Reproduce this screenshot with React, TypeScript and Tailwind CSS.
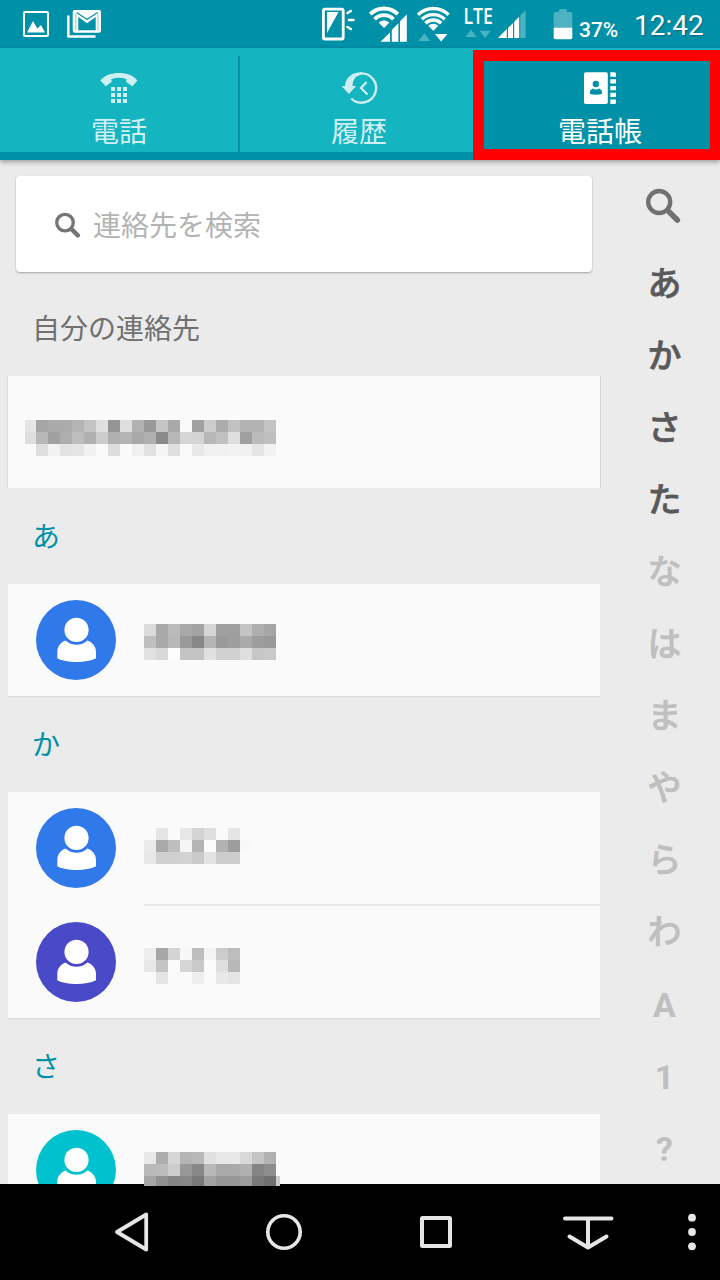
import type { ReactNode } from "react";

const FONT = "font-['Roboto','Noto_Sans_CJK_JP',sans-serif]";

// One hex pair per grey tile, rows separated by "/"
const MASKS = {
  own: "e5 a5 aa ab b4 c3 df 95 df b1 98 c5 a9 fa a1 cc ab c2 b3 b3 c3/de b8 a0 ae bd b0 cc b0 b4 a8 b0 8a b7 d5 d4 b7 c0 de 9f bb bf/fa de f2 e3 e5 f1 fa dd fa f0 e1 f5 df fa e8 f0 f0 f2 f1 e5 f2",
  a1: "db a9 ba a8 a3 d5 9f 9f c4 ae a5/bf a9 b8 99 88 b5 9a 9e aa 9d 99/e1 d9 fd c4 c3 e0 d1 d1 df c6 ca",
  ka1: "fa e4 fa e7 d4 de fa e4 fa/ea aa be f5 b4 fb b2 9d f8/e8 cf d0 d3 ca e3 cc cd fa",
  ka2: "ee a7 d4 f7 bd f3 cc bd/e7 c3 fb d6 c9 fb de b8/fa e4 fa fa ee fa e8 e4",
  sa1: "e8 ad d6 b4 b8 e0 e7 e8 d8 c5 b2/b9 bc cc 98 87 b8 aa aa b0 84 8e/a5 90 85 87 78 a3 97 97 9c 79 70 cc",
};

const KANA = ["あ", "か", "さ", "た", "な", "は", "ま", "や", "ら", "わ"];
const LATIN = ["A", "1", "?"];

function Mosaic({ tiles, className = "" }: { tiles: string; className?: string }) {
  return (
    <div className={`flex flex-col ${className}`}>
      {tiles.split("/").map((row, y) => (
        <div key={y} className="flex h-3 last:h-[var(--last-row,12px)]">
          {row.split(" ").map((c, x) => (
            <div
              key={x}
              className="w-3 shrink-0 nth-[12]:last:w-1"
              style={{ backgroundColor: `#${c}${c}${c}` }}
            />
          ))}
        </div>
      ))}
    </div>
  );
}

function Avatar({ className }: { className: string }) {
  return (
    <svg viewBox="0 0 80 80" className={`size-20 shrink-0 rounded-full ${className}`}>
      <circle cx="40.5" cy="29.9" r="12.1" fill="#fff" />
      <path
        d="M29.6 40.6C35 46.2 46 46.2 51.4 40.6C56.5 42.6 60 46.5 60 52V58.2C55 60.8 48 62 40.6 62S26 60.8 21.3 58.2V52C21.3 46.5 24.5 42.6 29.6 40.6Z"
        fill="#fff"
      />
    </svg>
  );
}

function StatusBar() {
  return (
    <header className="flex h-12 shrink-0 bg-[#0091a8] text-white">
      <svg viewBox="16 0 40 48" className="ml-4 h-12 w-10" fill="none">
        <rect x="24" y="12" width="24" height="24" rx="1" stroke="#fff" strokeWidth="2" />
        <path d="M27 32.5L33 21L37.3 28.5L41 25L45 32.5Z" fill="#fff" />
      </svg>
      <svg viewBox="56 0 56 48" className="h-12 w-14" fill="none">
        <path d="M68.3 15.5V36.5H95.5" stroke="#fff" strokeWidth="2.6" strokeLinejoin="round" />
        <rect x="72.7" y="10" width="28.3" height="22.7" rx="2" fill="#fff" />
        <path d="M75.8 13.5V30.5M98 13.5V30.5" stroke="#5bb8c6" strokeWidth="0.7" />
        <path d="M78.3 17V30.3H95.7V17L87 23.2Z" fill="#0091a8" />
        <path d="M76.6 12.6L87 19.6L97.5 12.6" stroke="#0091a8" strokeWidth="1.2" />
      </svg>

      <svg viewBox="316 0 46 48" className="ml-[204px] h-12 w-[46px]" fill="none" stroke="#fff">
        <rect x="323.4" y="9.2" width="19.8" height="29.8" rx="1.5" strokeWidth="2.8" />
        <path d="M327 12H338.5L327 33Z" fill="#fff" stroke="none" />
        <path d="M347.5 13L350.8 11M349 20H353.5M347.5 27L350.8 29" strokeWidth="2.6" strokeLinecap="round" />
      </svg>
      <svg viewBox="362 0 50 48" className="h-12 w-[50px]" fill="none">
        <path d="M370.2 14.2A19.5 19.5 0 0 1 397.8 14.2M374.6 19.2A13 13 0 0 1 393.4 19.2" stroke="#fff" strokeWidth="3.8" />
        <path d="M378.6 22.6A8 8 0 0 1 389.4 22.6L384 28Z" fill="#fff" />
        <path d="M380.5 41.8L390 32.5V41.8ZM391.8 41.8V30L398.4 23.2V41.8ZM400 41.8V21.2L406.8 14.6V41.8Z" fill="#fff" />
      </svg>
      <svg viewBox="412 0 48 48" className="h-12 w-12" fill="none">
        <path
          d="M418 14.7A22 22 0 0 1 448.6 14.7M421.8 19.2A16.5 16.5 0 0 1 444.8 19.2M425.4 23.2A11.3 11.3 0 0 1 441.2 23.2"
          stroke="#fff"
          strokeWidth="3.3"
        />
        <path d="M428.2 25.8A7.3 7.3 0 0 1 438.4 25.8L433.3 30.8Z" fill="#fff" />
        <path d="M418.3 41L424.3 33.3L430.3 41Z" fill="#4db3c3" />
        <path d="M435 34H447.5L441.2 41.6Z" fill="#fff" />
      </svg>
      <svg viewBox="460 0 72 48" className="h-12 w-[72px]">
        <text x="463.5" y="24.4" textLength="29.5" lengthAdjust="spacingAndGlyphs" fill="#fff" className="font-['Open_Sans',sans-serif] text-[21px] font-semibold">
          LTE
        </text>
        <path d="M465.5 37L471 29.8L476.7 37ZM479.6 30.8H490.6L485 38Z" fill="#4db3c3" />
        <path d="M498 38L506.8 29V38ZM508 38V28L513 23V38ZM514.2 38V21.8L519.2 16.8V38Z" fill="#fff" />
        <path d="M520.3 38V15.6L525.6 10V38Z" fill="#4db3c3" />
      </svg>
      <svg viewBox="532 0 44 48" className="h-12 w-11">
        <path d="M559 12V10.5Q559 9 560.5 9H565.5Q567 9 567 10.5V12H570.5Q572.3 12 572.3 13.8V28H553.7V13.8Q553.7 12 555.5 12Z" fill="#4db3c3" />
        <path d="M553.7 27.8H572.3V37.5Q572.3 39.3 570.5 39.3H555.5Q553.7 39.3 553.7 37.5Z" fill="#fff" />
      </svg>
      <span className="ml-[3px] w-[55px] pt-[18px] text-[21px] leading-6 font-medium">37%</span>
      <span className="pt-2.5 text-[28px] leading-8 [text-shadow:1px_1px_2px_rgba(0,0,0,0.3)]">12:42</span>
    </header>
  );
}

function Tab({ label, className, children }: { label: string; className: string; children: ReactNode }) {
  return (
    <div className={`flex flex-col items-center text-[28px] leading-[34px] ${className}`}>
      {children}
      <span>{label}</span>
    </div>
  );
}

function Tabs() {
  return (
    <nav className="relative z-10 flex h-28 shrink-0 bg-[#14b5c0] text-[#cfeff2] shadow-[0_2px_5px_rgba(0,0,0,0.35)]">
      <Tab label="電話" className="w-[238px] border-b-8 border-[#0091a8] pt-5">
        <svg viewBox="99 68 40 48" className="h-12 w-10" fill="currentColor">
          <path d="M100.4 80.4C108 70.6 130 70.6 137.4 80.4L132.4 86.3L126 81.8L126.6 79.2C121.6 77.3 116.4 77.3 111.2 79.2L111.8 81.8L105.8 86.3Z" />
          <path d="M111 87h4v4h-4zM117 87h4v4h-4zM123 87h4v4h-4zM111 93h4v4h-4zM117 93h4v4h-4zM123 93h4v4h-4zM111 99h4v4h-4zM117 99h4v4h-4zM123 99h4v4h-4z" />
        </svg>
      </Tab>
      <div className="mt-2 w-0.5 bg-[#0091a8]" />
      <Tab label="履歴" className="w-[233px] border-b-8 border-[#0091a8] pt-5 pl-[5px]">
        <svg viewBox="339 68 40 48" className="h-12 w-10" fill="none" stroke="currentColor">
          <path d="M360 73.5A14.6 14.6 0 1 1 351.3 98.5" strokeWidth="2.4" />
          <path d="M361.5 72.3C352 72.3 345.5 77.5 345 86H341.5L348.9 94L356 86H352.5C352.5 80 355.5 75.5 361.5 74.8Z" fill="currentColor" stroke="none" />
          <path d="M366.5 82L361 88L367.5 94.5" strokeWidth="2.2" />
        </svg>
      </Tab>
      <Tab
        label="電話帳"
        className="mt-0.5 w-[247px] border-[11px] border-r-10 border-[#ff0000] bg-[#0091a8] pt-[7px] pl-1.5 text-white"
      >
        <svg viewBox="580 68 40 48" className="h-12 w-10 shrink-0" fill="currentColor">
          <rect x="584" y="72.2" width="23.8" height="31.8" rx="1.8" />
          <path d="M610.3 72.2H614.5Q616 72.2 616 73.7V76.8H610.3ZM610.3 79.2H616V83.4H610.3ZM610.3 86H616V90.2H610.3ZM610.3 92.8H616V97H610.3ZM610.3 99.5H616V102.5Q616 104 614.5 104H610.3Z" />
          <circle cx="595.9" cy="84" r="3.2" fill="#0091a8" />
          <path d="M592.6 88.4Q595.9 90.4 599.2 88.4Q602 89.6 602 92V94Q595.9 95.6 589.9 94V92Q589.9 89.6 592.6 88.4Z" fill="#0091a8" />
        </svg>
      </Tab>
    </nav>
  );
}

function SectionTitle({ children, className }: { children: ReactNode; className: string }) {
  return <h2 className={`flex items-center pt-1 pl-6 text-[28px] leading-8 ${className}`}>{children}</h2>;
}

function Contact({ color, tiles, className = "" }: { color: string; tiles: string; className?: string }) {
  return (
    <li className="flex h-28 items-start pt-4 pl-7">
      <Avatar className={color} />
      <Mosaic tiles={tiles} className={`ml-7 ${className}`} />
    </li>
  );
}

function ContactList() {
  return (
    <section className="w-[592px]">
      <label className="mt-4 ml-2 flex h-24 w-[576px] items-center rounded bg-white text-[28px] text-[#b3b3b3] shadow-[0_1px_2px_rgba(0,0,0,0.3)]">
        <svg viewBox="54 210 28 28" className="ml-[38px] size-7" fill="none" stroke="#757575" strokeLinecap="round">
          <circle cx="65" cy="222.6" r="8.3" strokeWidth="3.3" />
          <path d="M72 229.6L77.8 235.4" strokeWidth="4.4" />
        </svg>
        <span className="ml-[11px] pt-1.5">連絡先を検索</span>
      </label>
      <SectionTitle className="mt-2 h-24 text-[#707070]">自分の連絡先</SectionTitle>
      <div className="h-28 bg-[#fafafa] pt-11 pl-4 shadow-[1px_0_#d6d6d6,-1px_0_#dcdcdc]">
        <Mosaic tiles={MASKS.own} className="ml-px [&>div>div:first-child]:w-[11px]" />
      </div>

      <SectionTitle className="h-24 text-[#0091a8]">あ</SectionTitle>
      <ul className="bg-[#fafafa] shadow-[0_1px_#dbdbdb,0_2px_#e6e6e6]">
        <Contact color="bg-[#3079ea]" tiles={MASKS.a1} className="mt-6" />
      </ul>

      <SectionTitle className="h-24 text-[#0091a8]">か</SectionTitle>
      <ul className="bg-[#fafafa] shadow-[0_1px_#dbdbdb,0_2px_#e6e6e6]">
        <Contact color="bg-[#3079ea]" tiles={MASKS.ka1} className="mt-5" />
        <li className="ml-[136px] h-0.5 bg-[#e8e8e8]" />
        <Contact color="bg-[#4a49c7]" tiles={MASKS.ka2} className="mt-[26px]" />
      </ul>

      <SectionTitle className="h-24 text-[#0091a8]">さ</SectionTitle>
      <ul className="bg-[#fafafa]">
        <Contact color="bg-[#00c2cf]" tiles={MASKS.sa1} className="relative z-20 mt-[22px] [--last-row:10px]" />
      </ul>
    </section>
  );
}

function IndexBar() {
  return (
    <aside className="flex w-28 flex-col items-center pl-px text-[34px]">
      <svg viewBox="644 186 38 38" className="mt-[26px] mr-[3px] mb-6 size-[38px] shrink-0" fill="none" stroke="#707070" strokeLinecap="round">
        <circle cx="659.2" cy="202" r="11" strokeWidth="4.4" />
        <path d="M668.5 211.3L677.3 220" strokeWidth="5.6" />
      </svg>
      {KANA.map((ch, i) => (
        <span
          key={ch}
          className={`flex h-[72px] shrink-0 items-center font-medium [-webkit-text-stroke:0.6px_currentColor] ${i < 4 ? "text-[#595959]" : "text-[#bfbfbf]"}`}
        >
          {ch}
        </span>
      ))}
      {LATIN.map((ch) => (
        <span key={ch} className="flex h-[72px] shrink-0 items-center pt-0.5 font-bold text-[#bfbfbf]">
          {ch}
        </span>
      ))}
    </aside>
  );
}

function NavBar() {
  return (
    <footer className="relative z-10 flex h-24 shrink-0 bg-black">
      <svg viewBox="104 1184 56 96" className="ml-[104px] h-24 w-14" fill="none" stroke="#e6e6e6" strokeWidth="3.8" strokeLinejoin="round">
        <path d="M146.2 1214.5V1249.5L117 1232Z" />
      </svg>
      <svg viewBox="256 1184 56 96" className="ml-24 h-24 w-14" fill="none" stroke="#e6e6e6" strokeWidth="3.6">
        <circle cx="284" cy="1232" r="16.2" />
      </svg>
      <svg viewBox="408 1184 56 96" className="ml-24 h-24 w-14" fill="none" stroke="#e6e6e6" strokeWidth="4" strokeLinejoin="round">
        <rect x="422" y="1218" width="28" height="28" rx="0.5" />
      </svg>
      <svg viewBox="560 1184 56 96" className="ml-24 h-24 w-14" fill="none" stroke="#e6e6e6" strokeWidth="4" strokeLinecap="round" strokeLinejoin="round">
        <path d="M565 1218.5H611.5M588 1219V1246M569.5 1236.5L588 1247.5L606.5 1236.5" />
      </svg>
      <svg viewBox="676 1184 32 96" className="ml-[60px] h-24 w-8" fill="#e6e6e6">
        <circle cx="692" cy="1217.7" r="3.9" />
        <circle cx="692" cy="1232" r="3.9" />
        <circle cx="692" cy="1246.3" r="3.9" />
      </svg>
    </footer>
  );
}

export default function App() {
  return (
    <div className={`flex h-[1280px] w-[720px] flex-col overflow-hidden bg-[#ebebeb] ${FONT}`}>
      <StatusBar />
      <Tabs />
      <main className="flex h-[1024px] shrink-0 justify-between pl-2">
        <ContactList />
        <IndexBar />
      </main>
      <NavBar />
    </div>
  );
}
